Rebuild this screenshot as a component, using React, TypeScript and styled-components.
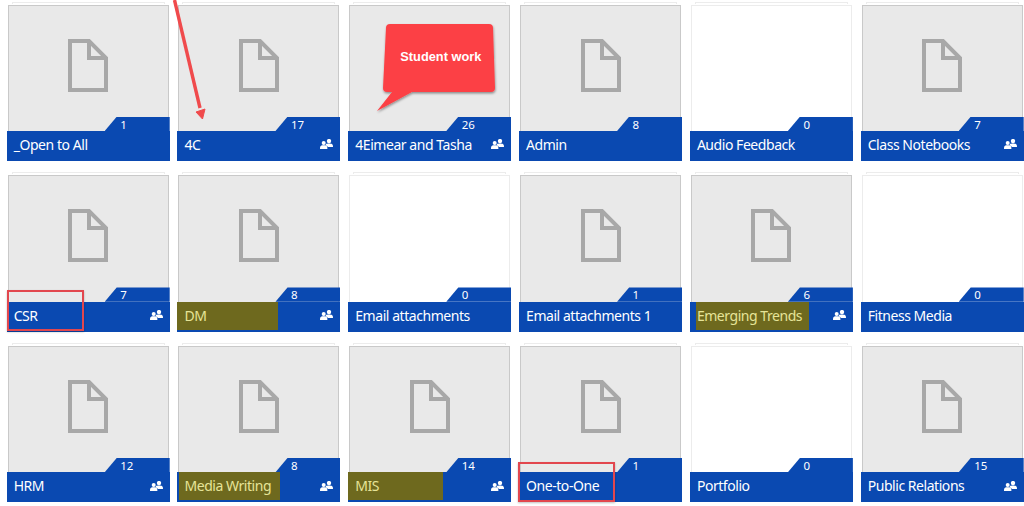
import React from "react";
import styled, { createGlobalStyle } from "styled-components";

const Global = createGlobalStyle`
  html, body { margin: 0; padding: 0; background: #fff; width: 1024px; height: 506px; overflow: hidden; }
  body { font-family: "Noto Sans", "Open Sans", sans-serif; }
`;

const Page = styled.main`
  position: relative;
  width: 1024px;
  height: 506px;
  overflow: hidden;
  box-sizing: border-box;
  padding: 4.7px 0 0 6.7px;
`;

const Grid = styled.div`
  display: grid;
  grid-template-columns: repeat(6, 163px);
  grid-auto-rows: 156.3px;
  column-gap: 7.8px;
  row-gap: 14.4px;
`;

const Tile = styled.article`
  position: relative;
  display: flex;
  flex-direction: column;
  &::before {
    content: "";
    position: absolute;
    left: 5px;
    right: 5px;
    top: -3px;
    height: 2px;
    border: 1px solid #ececec;
    border-bottom: 0;
    box-sizing: border-box;
  }
`;

const Card = styled.div<{ $empty: boolean }>`
  flex: 1;
  margin: 0 1px;
  display: flex;
  align-items: flex-start;
  justify-content: center;
  padding-top: 33px;
  box-sizing: border-box;
  background: ${(p) => (p.$empty ? "#fff" : "#e9e9e9")};
  border: 1px solid ${(p) => (p.$empty ? "#ececec" : "#c9c9c9")};
  border-bottom: 0;
`;

const Footer = styled.div`
  position: relative;
  height: 30px;
  flex: none;
  background: #0a49b1;
  display: flex;
  align-items: center;
  justify-content: space-between;
  padding-right: 7px;
  box-sizing: border-box;
`;

const Tab = styled.div`
  position: absolute;
  right: 0;
  bottom: 100%;
  width: 65px;
  height: 14.3px;
  background: #0a49b1;
  clip-path: polygon(12px 0, 100% 0, 100% 100%, 0 100%);
  color: #fff;
  font-size: 11.5px;
  line-height: 16px;
  padding-left: 15.5px;
  box-sizing: border-box;
  white-space: nowrap;
`;

const Name = styled.span<{ $marked: boolean; $inset: number; $width: number }>`
  align-self: flex-start;
  box-sizing: border-box;
  margin-left: ${(p) => p.$inset}px;
  padding-left: ${(p) => 7 - p.$inset}px;
  width: ${(p) => (p.$width ? `${p.$width}px` : "auto")};
  height: 28px;
  background: ${(p) => (p.$marked ? "#6e691e" : "transparent")};
  color: ${(p) => (p.$marked ? "#e6e498" : "#fff")};
  font-size: 14px;
  letter-spacing: -0.45px;
  line-height: 28px;
  white-space: nowrap;
`;

const GroupSvg = styled.svg`
  width: 13px;
  height: 10px;
  flex: none;
  margin-top: -3px;
  fill: #fff;
`;

const RedBox = styled.div<{ $w: number; $h: number; $x: number }>`
  position: absolute;
  left: ${(p) => p.$x}px;
  bottom: 0.5px;
  width: ${(p) => p.$w}px;
  height: ${(p) => p.$h}px;
  border: 2px solid #e2474e;
  box-sizing: border-box;
  box-shadow: 0 1px 2px rgba(0, 0, 0, 0.25);
`;

const Arrow = styled.svg`
  position: absolute;
  left: 165px;
  top: 0;
  width: 50px;
  height: 125px;
`;

const Callout = styled.div`
  position: absolute;
  left: 29px;
  top: 19px;
  width: 120px;
  height: 92px;
`;

const CalloutShape = styled.svg`
  position: absolute;
  inset: 0;
  width: 120px;
  height: 92px;
  overflow: visible;
`;

const CalloutText = styled.span`
  position: absolute;
  left: 23px;
  top: 26.5px;
  font-family: "Liberation Sans", Arial, sans-serif;
  font-weight: 700;
  font-size: 12.8px;
  line-height: 14px;
  color: #fff;
  white-space: nowrap;
`;

const DocIcon = () => (
  <svg width="40" height="53" viewBox="0 0 40 53" fill="none" stroke="#a8a8a8" strokeWidth="4">
    <path d="M2 2H21L38 19V51H2Z" />
    <path d="M21 2V19H38" />
  </svg>
);

const GroupIcon = () => (
  <GroupSvg viewBox="0 0 13 10">
    <circle cx="9" cy="2.1" r="2.2" />
    <path d="M5.8 5.2C7 4.4 11 4.4 12.2 5.2C12.8 5.6 13 6.4 13 8H7.8C7.6 7.2 6.8 6.6 5.8 6.4Z" />
    <circle cx="3.7" cy="4" r="2" />
    <path d="M0 10C0 8 .2 7.2 1 6.8C2 6.2 5.4 6.2 6.4 6.8C7.2 7.2 7.4 8 7.4 10Z" />
  </GroupSvg>
);

type Item = {
  name: string;
  count: number;
  group?: boolean;
  mark?: [number, number];
  box?: [number, number, number];
  callout?: boolean;
};

const items: Item[] = [
  { name: "_Open to All", count: 1 },
  { name: "4C", count: 17, group: true },
  { name: "4Eimear and Tasha", count: 26, group: true, callout: true },
  { name: "Admin", count: 8 },
  { name: "Audio Feedback", count: 0 },
  { name: "Class Notebooks", count: 7, group: true },
  { name: "CSR", count: 7, group: true, box: [77, 41, 0] },
  { name: "DM", count: 8, group: true, mark: [0, 101] },
  { name: "Email attachments", count: 0 },
  { name: "Email attachments 1", count: 1 },
  { name: "Emerging Trends", count: 6, group: true, mark: [6, 113] },
  { name: "Fitness Media", count: 0 },
  { name: "HRM", count: 12, group: true },
  { name: "Media Writing", count: 8, group: true, mark: [2, 101] },
  { name: "MIS", count: 14, group: true, mark: [0, 95] },
  { name: "One-to-One", count: 1, box: [97, 40, -1] },
  { name: "Portfolio", count: 0 },
  { name: "Public Relations", count: 15, group: true },
];

export default function App() {
  return (
    <Page>
      <Global />
      <Grid>
        {items.map((it) => (
          <Tile key={it.name}>
            <Card $empty={it.count === 0}>
              {it.count > 0 && !it.callout && <DocIcon />}
            </Card>
            <Footer>
              <Tab>{it.count}</Tab>
              <Name $marked={!!it.mark} $inset={it.mark ? it.mark[0] : 0} $width={it.mark ? it.mark[1] : 0}>
                {it.name}
              </Name>
              {it.group && <GroupIcon />}
            </Footer>
            {it.box && <RedBox $x={it.box[2]} $w={it.box[0]} $h={it.box[1]} />}
            {it.callout && (
              <Callout>
                <CalloutShape viewBox="0 0 120 92">
                  <defs>
                    <filter id="callout-shadow" x="-10%" y="-10%" width="125%" height="125%">
                      <feDropShadow dx="0.5" dy="1.5" stdDeviation="1.2" floodColor="#000" floodOpacity="0.4" />
                    </filter>
                  </defs>
                  <path
                    d="M13 0H112Q116 0 116 4L118 64Q118 68 114 68H35L0 87L15 68H10Q6 68 6 64L9 4Q9 0 13 0Z"
                    fill="#fc4145"
                    filter="url(#callout-shadow)"
                  />
                </CalloutShape>
                <CalloutText>Student work</CalloutText>
              </Callout>
            )}
          </Tile>
        ))}
      </Grid>
      <Arrow viewBox="0 0 50 125">
        <path d="M9.5 0L35 108" stroke="#f04a4c" strokeWidth="3.4" fill="none" />
        <path d="M37.5 119L40 109L31 112Z" fill="#f04a4c" stroke="#f04a4c" strokeWidth="1" />
      </Arrow>
    </Page>
  );
}
